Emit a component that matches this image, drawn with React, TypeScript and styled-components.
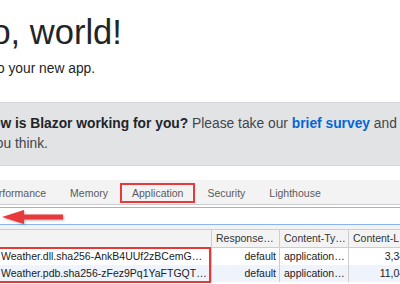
import styled, { createGlobalStyle } from "styled-components";

const GlobalStyle = createGlobalStyle`
  html, body {
    margin: 0;
    padding: 0;
    background: #fff;
    overflow: hidden;
  }
  body {
    font-family: "Liberation Sans", Arial, sans-serif;
  }
`;

const Page = styled.div`
  width: 400px;
  height: 284px;
  overflow: hidden;
  display: flex;
  flex-direction: column;
`;

const Content = styled.main`
  margin-left: -68px;
  padding-top: 12px;
  color: #212529;
`;

const Title = styled.h1`
  margin: 0;
  font-size: 34.5px;
  font-weight: 400;
  line-height: 41px;
  white-space: nowrap;
`;

const Lead = styled.p`
  margin: 6px 0 0;
  font-size: 13.8px;
  line-height: 20.7px;
  white-space: nowrap;
`;

const Alert = styled.div`
  margin-top: 22px;
  width: 620px;
  padding: 11px 0 10px;
  background: #e2e3e5;
  border-top: 1px solid #d6d8db;
  border-bottom: 1px solid #d6d8db;
  color: #41464b;
  font-size: 13.8px;
  line-height: 20.5px;
`;

const AlertLine = styled.div<{ $indent: number }>`
  white-space: nowrap;
  margin-left: ${(p) => p.$indent}px;
`;

const Strong = styled.strong`
  color: #212529;
  font-weight: 700;
`;

const SurveyLink = styled.a`
  color: #0366d6;
  font-weight: 700;
  text-decoration: none;
`;

const DevTools = styled.section`
  margin-top: 14px;
  font-family: "Liberation Sans", Arial, sans-serif;
  font-size: 10.5px;
  color: #333;
`;

const TabBar = styled.div`
  display: flex;
  align-items: flex-end;
  height: 23px;
  padding-bottom: 1px;
  margin-left: -26px;
  background: #f3f3f3;
  border-bottom: 1px solid #cbcdd1;
`;

const Tab = styled.div<{ $marked?: boolean }>`
  height: 16px;
  line-height: 16px;
  padding: 0 10px;
  border: 2px solid ${(p) => (p.$marked ? "#e8393c" : "transparent")};
  color: #5a5a5a;
  white-space: nowrap;
`;

const FilterBar = styled.div`
  margin-top: 2px;
  height: 16px;
  display: flex;
  align-items: center;
  border-top: 1px solid #8ab4f8;
  border-bottom: 1px solid #8ab4f8;
`;

const Arrow = styled.svg`
  margin: 3px 0 0 1px;
  filter: drop-shadow(1px 1px 1px rgba(0, 0, 0, 0.3));
`;

const Strip = styled.div`
  height: 4px;
  background: #f3f3f3;
`;

const Grid = styled.div`
  display: grid;
  grid-template-columns: 211px 68px 69px 66px;
  width: 414px;
`;

const HeadCell = styled.div`
  height: 17px;
  line-height: 17px;
  padding: 0 2px 0 4px;
  background: #f3f3f3;
  border-top: 1px solid #cdcdcd;
  border-bottom: 1px solid #cdcdcd;
  border-left: 1px solid #cdcdcd;
  white-space: nowrap;
  overflow: hidden;
  text-overflow: ellipsis;
  &:first-child {
    border-left: none;
  }
`;

const Body = styled.div`
  position: relative;
`;

const Cell = styled.div<{ $striped?: boolean; $align?: "left" | "right"; $first?: boolean }>`
  height: 17px;
  line-height: 17px;
  padding: ${(p) => (p.$first ? "0 2px 0 1px" : "0 3px 0 4px")};
  background: ${(p) => (p.$striped ? "#eef3fc" : "#fff")};
  border-left: ${(p) => (p.$first ? "none" : "1px solid #cdcdcd")};
  text-align: ${(p) => p.$align ?? "left"};
  color: #222;
  white-space: nowrap;
  overflow: hidden;
  text-overflow: ellipsis;
`;

const Highlight = styled.div`
  position: absolute;
  left: -2px;
  top: -1px;
  width: 209px;
  height: 32px;
  border: 2px solid #e53935;
  pointer-events: none;
`;

const tabs = ["Performance", "Memory", "Application", "Security", "Lighthouse"];

const rows = [
  {
    name: "Weather.dll.sha256-AnkB4UUf2zBCemGCRq8vT1xZpL0mQ3",
    type: "default",
    content: "application/octet-stream",
    length: "3,342",
  },
  {
    name: "Weather.pdb.sha256-zFez9Pq1YaFTGQTYyc7Hn2KdR5wB8",
    type: "default",
    content: "application/octet-stream",
    length: "11,046",
  },
];

export default function App() {
  return (
    <Page>
      <GlobalStyle />
      <Content>
        <Title>Hello, world!</Title>
        <Lead>Welcome to your new app.</Lead>
        <Alert>
          <AlertLine $indent={50}>
            <Strong>How is Blazor working for you?</Strong> Please take our{" "}
            <SurveyLink href="#">brief survey</SurveyLink> and
          </AlertLine>
          <AlertLine $indent={-16}>tell us what you think.</AlertLine>
        </Alert>
      </Content>
      <DevTools>
        <TabBar>
          {tabs.map((t) => (
            <Tab key={t} $marked={t === "Application"}>
              {t}
            </Tab>
          ))}
        </TabBar>
        <FilterBar>
          <Arrow width="64" height="16" viewBox="0 0 64 16">
            <polygon points="1,8 23,1 23,5.5 62,5.5 62,10.5 23,10.5 23,15" fill="#e8393c" />
          </Arrow>
        </FilterBar>
        <Strip />
        <Grid>
          <HeadCell />
          <HeadCell>Response-Type</HeadCell>
          <HeadCell>Content-Type</HeadCell>
          <HeadCell>Content-Length</HeadCell>
        </Grid>
        <Body>
          <Grid>
            {rows.map((r, i) => [
              <Cell key={`n${i}`} $first $striped={i === 1}>
                {r.name}
              </Cell>,
              <Cell key={`t${i}`} $align="right" $striped={i === 1}>
                {r.type}
              </Cell>,
              <Cell key={`c${i}`} $striped={i === 1}>
                {r.content}
              </Cell>,
              <Cell key={`l${i}`} $align="right" $striped={i === 1}>
                {r.length}
              </Cell>,
            ])}
          </Grid>
          <Highlight />
        </Body>
      </DevTools>
    </Page>
  );
}
